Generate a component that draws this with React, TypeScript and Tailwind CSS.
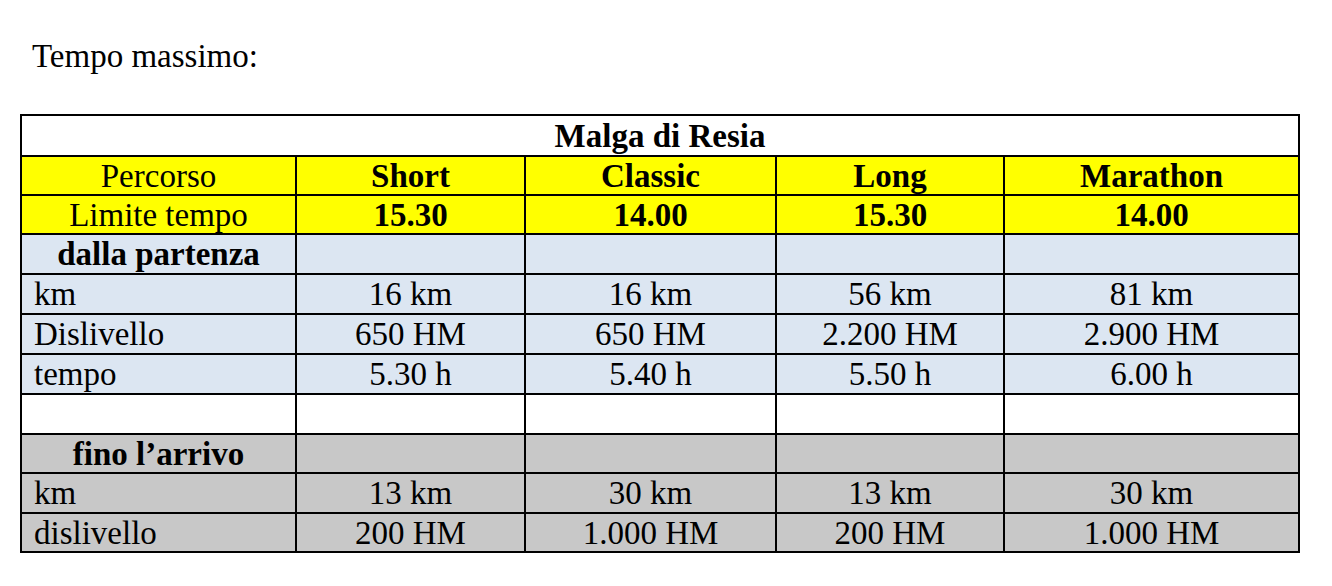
import React from "react";

type Cell = { text: string; bold?: boolean; left?: boolean };
type Row = { bg: string; cells: Cell[] };

const rows: Row[] = [
  {
    bg: "bg-[#ffff00]",
    cells: [
      { text: "Percorso" },
      { text: "Short", bold: true },
      { text: "Classic", bold: true },
      { text: "Long", bold: true },
      { text: "Marathon", bold: true },
    ],
  },
  {
    bg: "bg-[#ffff00]",
    cells: [
      { text: "Limite tempo" },
      { text: "15.30", bold: true },
      { text: "14.00", bold: true },
      { text: "15.30", bold: true },
      { text: "14.00", bold: true },
    ],
  },
  {
    bg: "bg-[#dce6f2]",
    cells: [{ text: "dalla partenza", bold: true }, { text: "" }, { text: "" }, { text: "" }, { text: "" }],
  },
  {
    bg: "bg-[#dce6f2]",
    cells: [{ text: "km", left: true }, { text: "16 km" }, { text: "16 km" }, { text: "56 km" }, { text: "81 km" }],
  },
  {
    bg: "bg-[#dce6f2]",
    cells: [
      { text: "Dislivello", left: true },
      { text: "650 HM" },
      { text: "650 HM" },
      { text: "2.200 HM" },
      { text: "2.900 HM" },
    ],
  },
  {
    bg: "bg-[#dce6f2]",
    cells: [{ text: "tempo", left: true }, { text: "5.30 h" }, { text: "5.40 h" }, { text: "5.50 h" }, { text: "6.00 h" }],
  },
  {
    bg: "bg-white",
    cells: [{ text: "" }, { text: "" }, { text: "" }, { text: "" }, { text: "" }],
  },
  {
    bg: "bg-[#c8c8c8]",
    cells: [{ text: "fino l\u2019arrivo", bold: true }, { text: "" }, { text: "" }, { text: "" }, { text: "" }],
  },
  {
    bg: "bg-[#c8c8c8]",
    cells: [{ text: "km", left: true }, { text: "13 km" }, { text: "30 km" }, { text: "13 km" }, { text: "30 km" }],
  },
  {
    bg: "bg-[#c8c8c8]",
    cells: [
      { text: "dislivello", left: true },
      { text: "200 HM" },
      { text: "1.000 HM" },
      { text: "200 HM" },
      { text: "1.000 HM" },
    ],
  },
];

export default function App() {
  return (
    <div
      className="w-[1332px] h-[586px] bg-white text-black px-[20px] pt-[38px]"
      style={{ fontFamily: '"Liberation Serif", "Times New Roman", serif' }}
    >
      <div className="pl-[12px] text-[33px] leading-[36px]">Tempo massimo:</div>
      <div className="mt-[40px] w-[1280px] bg-black p-[2px] grid grid-cols-[273px_227px_249px_226px_293px] grid-rows-[39px_37px_37px_38px_38px_38px_38px_38px_37px_38px_37px] gap-[2px] text-[33px] leading-[36px]">
        <div className="col-span-5 bg-white flex items-center justify-center font-bold">Malga di Resia</div>
        {rows.map((row, ri) =>
          row.cells.map((c, ci) => (
            <div
              key={`${ri}-${ci}`}
              className={`${row.bg} flex items-center whitespace-nowrap ${
                c.left ? "justify-start pl-[12px]" : "justify-center"
              } ${c.bold ? "font-bold" : ""}`}
            >
              {c.text}
            </div>
          ))
        )}
      </div>
    </div>
  );
}
